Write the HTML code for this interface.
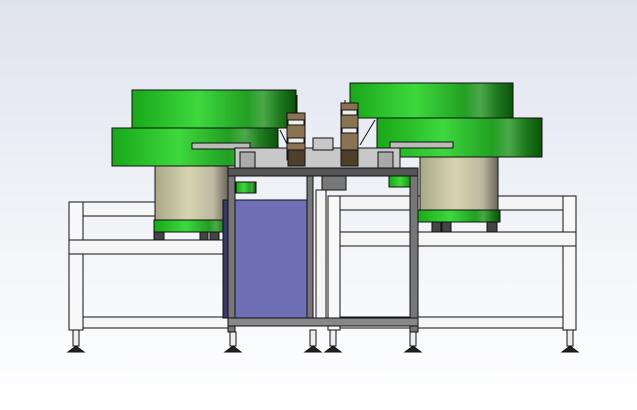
<!DOCTYPE html><html><head><style>body{margin:0}svg{display:block}</style></head><body>
<svg width="637" height="410" viewBox="0 0 637 410" xmlns="http://www.w3.org/2000/svg">
<defs>
<linearGradient id="bg" x1="0" y1="0" x2="0" y2="1"><stop offset="0" stop-color="#dfe3ed"/><stop offset="0.6" stop-color="#f3f5f9"/><stop offset="1" stop-color="#ffffff"/></linearGradient>
<linearGradient id="gr" x1="0" y1="0" x2="1" y2="0"><stop offset="0" stop-color="#18a818"/><stop offset="0.4" stop-color="#3ed83e"/><stop offset="0.7" stop-color="#22a022"/><stop offset="0.8" stop-color="#4aa84a"/><stop offset="0.9" stop-color="#1e7a1e"/><stop offset="1" stop-color="#0a520a"/></linearGradient>
<linearGradient id="bz" x1="0" y1="0" x2="1" y2="0"><stop offset="0" stop-color="#a8a888"/><stop offset="0.45" stop-color="#d6d4b0"/><stop offset="0.8" stop-color="#bdb8a2"/><stop offset="1" stop-color="#6a665a"/></linearGradient>
</defs>
<rect width="637" height="410" fill="url(#bg)"/>
<g stroke="#111" stroke-width="1">
<rect x="69" y="202" width="14" height="128" fill="#f8f8f8"/>
<rect x="83" y="202" width="145" height="14" fill="#f5f5f5"/>
<rect x="69" y="240" width="160" height="14" fill="#f5f5f5"/>
<rect x="83" y="317" width="145" height="11" fill="#f5f5f5"/>
<rect x="563" y="196" width="13" height="134" fill="#f8f8f8"/>
<rect x="328" y="196" width="12" height="134" fill="#f8f8f8"/>
<rect x="340" y="196" width="223" height="14" fill="#f5f5f5"/>
<rect x="340" y="232" width="236" height="14" fill="#f5f5f5"/>
<rect x="340" y="317" width="223" height="11" fill="#f5f5f5"/>
<rect x="316" y="190" width="10" height="130" fill="#f5f5f5"/>
<rect x="154" y="232" width="10" height="8" fill="#444"/><rect x="200" y="232" width="8" height="8" fill="#444"/><rect x="210" y="232" width="9" height="8" fill="#444"/>
<rect x="155" y="166" width="73" height="54" fill="url(#bz)"/>
<rect x="154" y="220" width="78" height="12" fill="url(#gr)"/>
<rect x="236" y="182" width="20" height="11" fill="url(#gr)"/>
<rect x="132" y="90" width="164" height="38" fill="url(#gr)"/>
<rect x="112" y="128" width="166" height="38" fill="url(#gr)"/>
<rect x="432" y="222" width="9" height="10" fill="#444"/><rect x="442" y="222" width="9" height="10" fill="#444"/><rect x="487" y="222" width="10" height="10" fill="#444"/>
<rect x="420" y="157" width="78" height="53" fill="url(#bz)"/>
<rect x="417" y="210" width="83" height="12" fill="url(#gr)"/>
<rect x="389" y="176" width="28" height="11" fill="url(#gr)"/>
<rect x="350" y="83" width="163" height="35" fill="url(#gr)"/>
<rect x="377" y="118" width="165" height="39" fill="url(#gr)"/>
<rect x="223" y="200" width="85" height="118" fill="#6f6fb6"/>
<rect x="223" y="200" width="6" height="118" fill="#38386a"/>
<rect x="228" y="170" width="7" height="162" fill="#777"/>
<rect x="307" y="176" width="6" height="150" fill="#777"/>
<rect x="410" y="170" width="8" height="162" fill="#777"/>
<rect x="228" y="318" width="190" height="8" fill="#888"/>
<rect x="228" y="168" width="190" height="8" fill="#555"/>
<rect x="322" y="176" width="24" height="14" fill="#777"/>
<rect x="192" y="143" width="58" height="6" fill="#bbb"/>
<rect x="390" y="142" width="63" height="6" fill="#bbb"/>
<rect x="235" y="148" width="165" height="20" fill="#c8c8c8"/>
<rect x="240" y="152" width="15" height="16" fill="#aaa"/>
<rect x="378" y="152" width="15" height="16" fill="#aaa"/>
<rect x="313" y="138" width="20" height="12" fill="#c8c8c8"/>
<line x1="297" y1="95" x2="297" y2="115"/><line x1="345" y1="100" x2="345" y2="105"/>
<line x1="280" y1="130" x2="290" y2="150"/><line x1="375" y1="120" x2="360" y2="145"/>
<rect x="287" y="113" width="18" height="47" fill="#8a7350"/>
<rect x="341" y="103" width="17" height="57" fill="#8a7350"/>
<g fill="#eee"><rect x="288" y="120" width="16" height="5"/><rect x="288" y="138" width="16" height="5"/><rect x="342" y="110" width="15" height="5"/><rect x="342" y="128" width="15" height="5"/></g>
<rect x="288" y="150" width="17" height="16" fill="#4d3f2a"/>
<rect x="341" y="150" width="17" height="16" fill="#4d3f2a"/>
<g fill="#222">
<path d="M68 352 l8 -6 l8 6z"/><path d="M225 352 l8 -6 l8 6z"/><path d="M305 352 l8 -6 l8 6z"/><path d="M325 352 l8 -6 l8 6z"/><path d="M405 352 l8 -6 l8 6z"/><path d="M562 352 l8 -6 l8 6z"/>
</g>
<g fill="#eee"><rect x="73" y="330" width="6" height="16"/><rect x="230" y="332" width="6" height="14"/><rect x="310" y="330" width="6" height="16"/><rect x="330" y="330" width="6" height="16"/><rect x="410" y="332" width="6" height="14"/><rect x="567" y="330" width="6" height="16"/></g>
</g>
</svg>
</body></html>
